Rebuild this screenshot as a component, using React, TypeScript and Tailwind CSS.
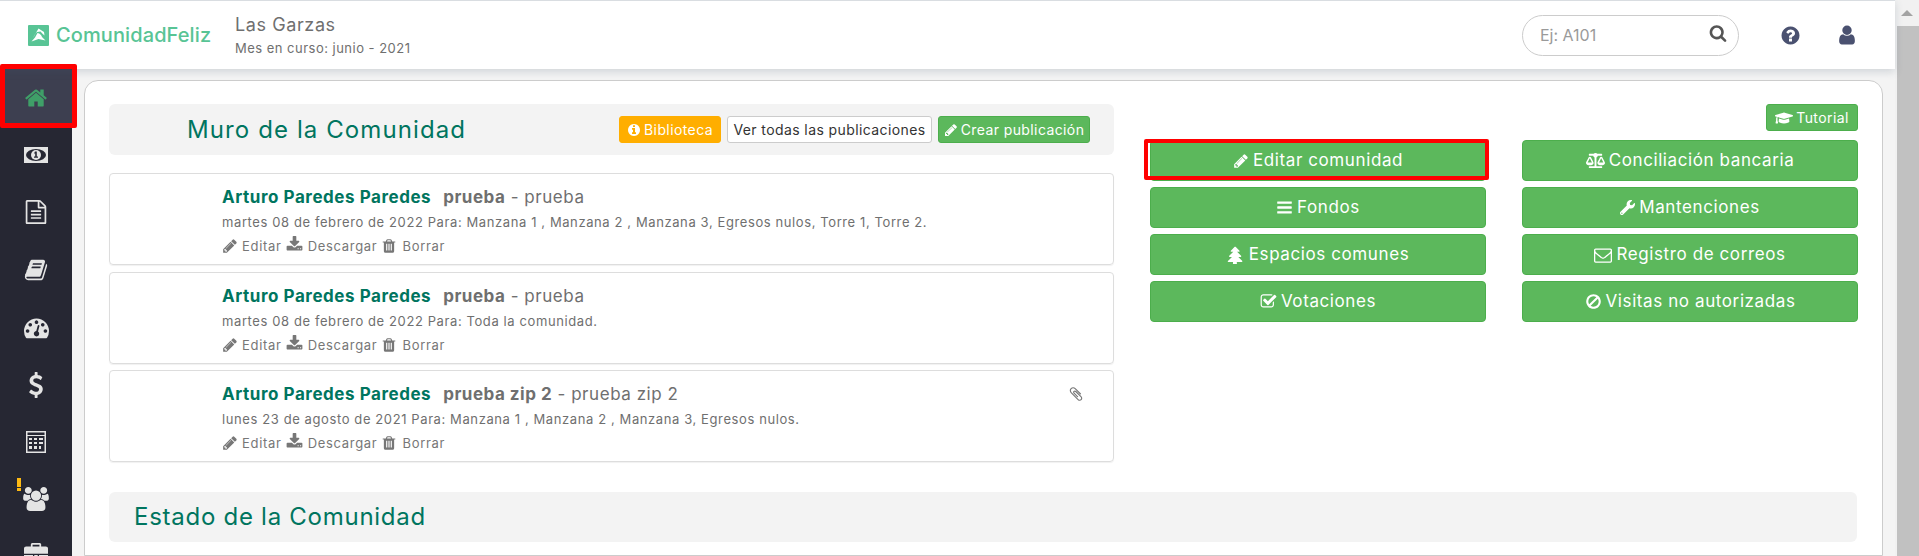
import type { ReactNode } from "react";
import { FaBalanceScale, FaGraduationCap, FaWrench } from "react-icons/fa";

// font awesome 4 glyphs, react-icons only ships the newer set
const glyphs = {
  home: "M1472 992v480q0 26-19 45t-45 19h-384v-384h-256v384h-384q-26 0-45-19t-19-45v-480q0-1 .5-3t.5-3l575-474 575 474q1 2 1 6zm223-69l-62 74q-8 9-21 11h-3q-13 0-21-7l-692-577-692 577q-12 8-24 7-13-2-21-11l-62-74q-8-10-7-23.500t11-21.500l719-599q32-26 76-26t76 26l244 204v-195q0-14 9-23t23-9h192q14 0 23 9t9 23v408l219 182q10 8 11 21.500t-7 23.500z",
  pencil: "M491 1536l91-91-235-235-91 91v107h128v128h107zm523-928q0-22-22-22-10 0-17 7l-542 542q-7 7-7 17 0 22 22 22 10 0 17-7l542-542q7-7 7-17zm-54-192l416 416-832 832h-416v-416zm683 96q0 53-37 90l-166 166-416-416 166-165q36-38 90-38 53 0 91 38l235 234q37 39 37 91z",
  download: "M1344 1344q0-26-19-45t-45-19-45 19-19 45 19 45 45 19 45-19 19-45zm256 0q0-26-19-45t-45-19-45 19-19 45 19 45 45 19 45-19 19-45zm128-224v320q0 40-28 68t-68 28h-1472q-40 0-68-28t-28-68v-320q0-40 28-68t68-28h465l135 136q58 56 136 56t136-56l136-136h464q40 0 68 28t28 68zm-325-569q17 41-14 70l-448 448q-18 19-45 19t-45-19l-448-448q-31-29-14-70 17-39 59-39h256v-448q0-26 19-45t45-19h256q26 0 45 19t19 45v448h256q42 0 59 39z",
  trash: "M704 1376v-704q0-14-9-23t-23-9h-64q-14 0-23 9t-9 23v704q0 14 9 23t23 9h64q14 0 23-9t9-23zm256 0v-704q0-14-9-23t-23-9h-64q-14 0-23 9t-9 23v704q0 14 9 23t23 9h64q14 0 23-9t9-23zm256 0v-704q0-14-9-23t-23-9h-64q-14 0-23 9t-9 23v704q0 14 9 23t23 9h64q14 0 23-9t9-23zm-544-992h448l-48-117q-7-9-17-11h-317q-10 2-17 11zm928 32v64q0 14-9 23t-23 9h-96v948q0 83-47 143.500t-113 60.500h-832q-66 0-113-58.500t-47-141.500v-952h-96q-14 0-23-9t-9-23v-64q0-14 9-23t23-9h309l70-167q15-37 54-63t79-26h320q40 0 79 26t54 63l70 167h309q14 0 23 9t9 23z",
  file: "M1596 380q28 28 48 76t20 88v1152q0 40-28 68t-68 28h-1344q-40 0-68-28t-28-68v-1600q0-40 28-68t68-28h896q40 0 88 20t76 48zm-444-244v376h376q-10-29-22-41l-313-313q-12-12-41-22zm384 1528v-1024h-416q-40 0-68-28t-28-68v-416h-768v1536h1280zm-1024-864q0-14 9-23t23-9h704q14 0 23 9t9 23v64q0 14-9 23t-23 9h-704q-14 0-23-9t-9-23v-64zm736 224q14 0 23 9t9 23v64q0 14-9 23t-23 9h-704q-14 0-23-9t-9-23v-64q0-14 9-23t23-9h704zm0 256q14 0 23 9t9 23v64q0 14-9 23t-23 9h-704q-14 0-23-9t-9-23v-64q0-14 9-23t23-9h704z",
  book: "M1703 478q40 57 18 129l-275 906q-19 64-76.500 107.500t-122.500 43.500h-923q-77 0-148.500-53.500t-99.500-131.500q-24-67-2-127 0-4 3-27t4-37q1-8-3-21.500t-3-19.500q2-11 8-21t16.500-23.500 16.500-23.500q23-38 45-91.500t30-91.500q3-10 .5-30t-.5-28q3-11 17-28t17-23q21-36 42-92t25-90q1-9-2.500-32t.5-28q4-13 22-30.500t22-22.500q19-26 42.500-84.500t27.500-96.500q1-8-3-25.500t-2-26.500q2-8 9-18t18-23 17-21q8-12 16.500-30.500t15-35 16-36 19.500-32 26.500-23.500 36-11.500 47.500 5.500l-1 3q38-9 51-9h761q74 0 114 56t18 130l-274 906q-36 119-71.500 153.500t-128.500 34.500h-869q-27 0-38 15-11 16-1 43 24 70 144 70h923q29 0 56-15.500t35-41.500l300-987q7-22 5-57 38 15 59 43zm-1064 2q-4 13 2 22.500t20 9.500h608q13 0 25.500-9.500t16.500-22.500l21-64q4-13-2-22.500t-20-9.500h-608q-13 0-25.500 9.500t-16.500 22.500zm-83 256q-4 13 2 22.500t20 9.500h608q13 0 25.500-9.500t16.500-22.500l21-64q4-13-2-22.500t-20-9.500h-608q-13 0-25.500 9.500t-16.500 22.500z",
  dashboard: "M384 1152q0-53-37.500-90.500t-90.500-37.500-90.500 37.500-37.500 90.500 37.500 90.500 90.500 37.500 90.500-37.500 37.500-90.500zm192-448q0-53-37.500-90.500t-90.500-37.500-90.500 37.500-37.500 90.500 37.500 90.500 90.500 37.500 90.500-37.500 37.500-90.500zm428 481l101-382q6-26-7.500-48.500t-38.500-29.500-48 6.500-30 39.500l-101 382q-60 5-107 43.500t-63 98.500q-20 77 20 146t117 89 146-20 89-117q16-60-6-117t-72-91zm660-33q0-53-37.500-90.500t-90.500-37.500-90.500 37.500-37.500 90.500 37.500 90.500 90.500 37.500 90.500-37.500 37.500-90.500zm-640-640q0-53-37.500-90.500t-90.500-37.500-90.500 37.500-37.500 90.500 37.500 90.500 90.500 37.500 90.500-37.500 37.500-90.500zm448 192q0-53-37.500-90.500t-90.500-37.500-90.500 37.500-37.500 90.500 37.500 90.500 90.500 37.500 90.500-37.500 37.500-90.500zm320 448q0 261-141 483-19 29-54 29h-1402q-35 0-54-29-141-221-141-483 0-182 71-348t191-286 286-191 348-71 348 71 286 191 191 286 71 348z",
  dollar: "M1362 1185q0 153-99.500 263.500t-258.500 136.500v175q0 14-9 23t-23 9h-135q-13 0-22.500-9.500t-9.500-22.500v-175q-66-9-127.500-31t-101.500-44.500-74-48-46.500-37.500-17.500-18q-17-21-2-41l103-135q7-10 23-12 15-2 24 9l2 2q113 99 243 125 37 8 74 8 81 0 142.500-43t61.500-122q0-28-15-53t-33.500-42-58.500-37.500-66-32-80-32.500q-39-16-61.500-25t-61.500-26.500-62.500-31-56.500-35.500-53.500-42.500-43.500-49-35.500-58-21-66.500-8.500-78q0-138 98-242t255-134v-180q0-13 9.500-22.500t22.500-9.500h135q14 0 23 9t9 23v176q57 6 110.500 23t87 33.500 63.500 37.500 39 29 15 14q17 18 5 38l-81 146q-8 15-23 16-14 3-27-7-3-3-14.500-12t-39-26.500-58.500-32-74.500-26-85.500-11.500q-95 0-155 43t-60 111q0 26 8.500 48t29.500 41.500 39.500 33 56 31 60.500 27 70 27.500q53 20 81 31.500t76 35 75.500 42.500 62 50 53 63.500 31.500 76.500 13 94z",
  briefcase: "M640 256h512v-128h-512v128zm1152 640v480q0 66-47 113t-113 47h-1472q-66 0-113-47t-47-113v-480h672v160q0 26 19 45t45 19h320q26 0 45-19t19-45v-160h672zm-768 0v128h-256v-128h256zm768-480v384h-1792v-384q0-66 47-113t113-47h352v-160q0-40 28-68t68-28h576q40 0 68 28t28 68v160h352q66 0 113 47t47 113z",
  question: "M1024 1376v-192q0-14-9-23t-23-9h-192q-14 0-23 9t-9 23v192q0 14 9 23t23 9h192q14 0 23-9t9-23zm256-672q0-88-55.500-163t-138.500-116-170-41q-243 0-371 213-15 24 8 42l132 100q7 6 19 6 16 0 25-12 53-68 86-92 34-24 86-24 48 0 85.500 26t37.500 59q0 38-20 61t-68 45q-63 28-115.500 86.500t-52.500 125.500v36q0 14 9 23t23 9h192q14 0 23-9t9-23q0-19 21.500-49.500t54.500-49.500q32-18 49-28.500t46-35 44.500-48 28-60.500 12.500-81zm384 192q0 209-103 385.500t-279.500 279.500-385.500 103-385.500-103-279.500-279.500-103-385.500 103-385.500 279.500-279.500 385.500-103 385.500 103 279.500 279.500 103 385.500z",
  user: "M1536 1399q0 109-62.500 187t-150.500 78h-854q-88 0-150.500-78t-62.500-187q0-85 8.500-160.500t31.500-152 58.500-131 94-89 134.500-34.500q131 128 313 128t313-128q76 0 134.500 34.500t94 89 58.500 131 31.500 152 8.500 160.500zm-256-887q0 159-112.500 271.500t-271.500 112.500-271.500-112.500-112.500-271.500 112.500-271.500 271.500-112.500 271.500 112.500 112.500 271.500z",
  search: "M1216 832q0-185-131.500-316.500t-316.500-131.500-316.500 131.500-131.500 316.500 131.500 316.500 316.500 131.500 316.500-131.500 131.500-316.500zm512 832q0 52-38 90t-90 38q-54 0-90-38l-343-342q-179 124-399 124-143 0-273.500-55.500t-225-150-150-225-55.500-273.500 55.500-273.500 150-225 225-150 273.500-55.500 273.500 55.500 225 150 150 225 55.500 273.500q0 220-124 399l343 343q37 37 37 90z",
  info: "M1152 1376v-160q0-14-9-23t-23-9h-96v-512q0-14-9-23t-23-9h-320q-14 0-23 9t-9 23v160q0 14 9 23t23 9h96v320h-96q-14 0-23 9t-9 23v160q0 14 9 23t23 9h448q14 0 23-9t9-23zm-128-896v-160q0-14-9-23t-23-9h-192q-14 0-23 9t-9 23v160q0 14 9 23t23 9h192q14 0 23-9t9-23zm640 416q0 209-103 385.500t-279.500 279.500-385.500 103-385.500-103-279.500-279.500-103-385.500 103-385.500 279.500-279.500 385.500-103 385.500 103 279.500 279.500 103 385.500z",
  envelope: "M1664 1504v-768q-32 36-69 66-268 206-426 338-51 43-83 67t-86.500 48.500-102.500 24.500h-2q-48 0-102.500-24.500t-86.500-48.500-83-67q-158-132-426-338-37-30-69-66v768q0 13 9.500 22.500t22.500 9.500h1472q13 0 22.500-9.500t9.500-22.500zm0-1051v-24.500l-.5-13-3-12.500-5.500-9-9-7.500-14-2.500h-1472q-13 0-22.500 9.500t-9.500 22.500q0 168 147 284 193 152 401 317 6 5 35 29.500t46 37.500 44.500 31.500 50.500 27.500 43 9h2q20 0 43-9t50.500-27.500 44.500-31.500 46-37.500 35-29.500q208-165 401-317 54-43 100.500-115.500t46.500-131.500zm128-37v1088q0 66-47 113t-113 47h-1472q-66 0-113-47t-47-113v-1088q0-66 47-113t113-47h1472q66 0 113 47t47 113z",
  check: "M1472 930v318q0 119-84.500 203.500t-203.500 84.500h-832q-119 0-203.500-84.500t-84.500-203.500v-832q0-119 84.500-203.500t203.500-84.500h832q63 0 117 25 15 7 18 23 3 17-9 29l-49 49q-10 10-23 10-3 0-9-2-23-6-45-6h-832q-66 0-113 47t-47 113v832q0 66 47 113t113 47h832q66 0 113-47t47-113v-254q0-13 9-22l64-64q10-10 23-10 6 0 12 3 20 8 20 29zm231-489l-814 814q-24 24-57 24t-57-24l-430-430q-24-24-24-57t24-57l110-110q24-24 57-24t57 24l263 263 647-647q24-24 57-24t57 24l110 110q24 24 24 57t-24 57z",
  clip: "M1596 1385q0 117-79 196t-196 79q-135 0-235-100l-777-776q-113-115-113-271 0-159 110-270t269-111q158 0 273 113l605 606q10 10 10 22 0 16-30.500 46.500t-46.500 30.500q-13 0-23-10l-606-607q-79-77-181-77-106 0-179 75t-73 181q0 105 76 181l776 777q63 63 145 63 64 0 106-42t42-106q0-82-63-145l-581-581q-26-24-60-24-29 0-48 19t-19 48q0 32 25 59l410 410q10 10 10 22 0 16-31 47t-47 31q-12 0-22-10l-410-410q-63-61-63-149 0-82 57-139t139-57q88 0 149 63l581 581q100 98 100 235z",
  bars: "M1664 1344v128q0 26-19 45t-45 19h-1408q-26 0-45-19t-19-45v-128q0-26 19-45t45-19h1408q26 0 45 19t19 45zm0-512v128q0 26-19 45t-45 19h-1408q-26 0-45-19t-19-45v-128q0-26 19-45t45-19h1408q26 0 45 19t19 45zm0-512v128q0 26-19 45t-45 19h-1408q-26 0-45-19t-19-45v-128q0-26 19-45t45-19h1408q26 0 45 19t19 45z",
  tree: "M1500 1536q0 26-19 45t-45 19h-460q2 38 7 114t5 118q0 24-16 40t-40 16h-288q-24 0-40-16t-16-40q0-42 5-118t7-114h-460q-26 0-45-19t-19-45 19-45l402-403h-229q-26 0-45-19t-19-45 19-45l402-403h-197q-26 0-45-19t-19-45 19-45l384-384q19-19 45-19t45 19l384 384q19 19 19 45t-19 45-45 19h-197l402 403q19 19 19 45t-19 45-45 19h-229l402 403q19 19 19 45z",
  ban: "M1440 893q0-161-87-295l-754 753q137 89 297 89 111 0 211.500-43.500t173.500-116.500 116-174.500 43-212.500zm-999 299l755-754q-135-91-300-91-148 0-273 73t-198 199-73 274q0 162 89 299zm1223-299q0 157-61 300t-163.500 246-245 164-298.500 61-298.500-61-245-164-163.500-246-61-300 61-299.500 163.500-245.500 245-164 298.500-61 298.500 61 245 164 163.500 245.500 61 299.500z",
};

type GlyphName = keyof typeof glyphs;

function Glyph({ name, size, className }: { name: GlyphName; size: number; className?: string }) {
  return (
    <svg width={size} height={size} viewBox="0 0 1792 1792" fill="currentColor" className={`shrink-0 ${className ?? ""}`}>
      <path d={glyphs[name]} />
    </svg>
  );
}

function UsersIcon() {
  return (
    <svg width="26" height="24" viewBox="0 0 1920 1792" fill="currentColor">
      <path d="M593 896q-162 5-265 128h-134q-82 0-138-40.500t-56-118.500q0-353 124-353 6 0 43.500 21t97.500 42.500 119 21.500q67 0 133-23-5 37-5 66 0 139 81 256zm1071 637q0 120-73 189.500t-194 69.500h-874q-121 0-194-69.500t-73-189.500q0-53 3.500-103.500t14-109 26.500-108.500 43-97.500 62-81 85.500-53.500 111.500-20q10 0 43 21.500t73 48 107 48 135 21.500 135-21.500 107-48 73-48 43-21.500q61 0 111.500 20t85.500 53.500 62 81 43 97.500 26.500 108.500 14 109 3.500 103.500zm-1024-1277q0 106-75 181t-181 75-181-75-75-181 75-181 181-75 181 75 75 181zm704 384q0 159-112.500 271.500t-271.500 112.500-271.500-112.500-112.500-271.500 112.500-271.500 271.500-112.500 271.500 112.500 112.500 271.500zm576 225q0 78-56 118.500t-138 40.500h-134q-103-123-265-128 81-117 81-256 0-29-5-66 66 23 133 23 59 0 119-21.500t97.500-42.500 43.500-21q124 0 124 353zm-128-609q0 106-75 181t-181 75-181-75-75-181 75-181 181-75 181 75 75 181z" />
    </svg>
  );
}

function MoneyIcon() {
  return (
    <svg width="24" height="16" viewBox="0 0 24 16" fill="none">
      <rect width="24" height="16" fill="#e4e4e4" />
      <ellipse cx="12" cy="8" rx="10" ry="6" fill="#262733" />
      <circle cx="12" cy="8" r="5" fill="#e4e4e4" />
      <path d="M11 4.500h1.800v5h1.200v1.200h-4v-1.200h1.200V6.500h-1.200z" fill="#262733" />
    </svg>
  );
}

function CalculatorIcon() {
  return (
    <svg width="20" height="22" viewBox="0 0 20 22" fill="#e4e4e4">
      <path d="M0 0h20v22H0zM1.500 5v15.500h17V5zM1.500 1.500V4h17V1.500z" fillRule="evenodd" />
      <path d="M3 7h3v2H3zM8 7h3v2H8zM13 7h4v2h-4zM3 11h3v2H3zM8 11h3v2H8zM13 11h4v2h-4zM3 15h3v3H3zM8 15h3v3H8zM13 15h2v3h-2z" />
    </svg>
  );
}

function Logo() {
  return (
    <div className="flex items-center gap-[7px]">
      <svg width="21" height="21" viewBox="0 0 21 21">
        <rect width="21" height="21" rx="1" fill="#58c495" />
        <path d="M10.500 3.500 16 7l.5 3.500-2-1.800-2-2.200-3.500.5L6.500 10 5 13z" fill="#fff" />
        <path d="M9.500 8c2.500.5 3.800 2 4.500 4l3.500 3.500-7-1.500-7 2.500 3.500-4z" fill="#fff" />
      </svg>
      <span className="text-[20px] font-medium tracking-[0.1px] text-[#58c495]">ComunidadFeliz</span>
    </div>
  );
}

function Header() {
  return (
    <header className="relative z-10 flex h-[69px] shrink-0 items-center border-t-[1px] border-[#d9dde1] bg-white shadow-[0_3px_8px_rgba(70,90,110,0.2)]">
      <div className="ml-[28px] w-[207px]">
        <Logo />
      </div>
      <div className="flex flex-col">
        <span className="mb-[3px] text-[18px] leading-[22px] tracking-[0.6px] text-[#6f6f6f]">Las Garzas</span>
        <span className="text-[13px] leading-[18px] tracking-[0.48px] text-[#6f6f6f]">Mes en curso: junio - 2021</span>
      </div>
      <div className="ml-auto flex items-center">
        <div className="flex h-[41px] w-[217px] items-center justify-between rounded-[21px] border border-[#cccccc] pl-[17px] pr-[11px]">
          <span className="text-[16px] text-[#9a9a9a]">Ej: A101</span>
          <Glyph name="search" size={18} className="mb-[4px] text-[#555555]" />
        </div>
        <Glyph name="question" size={21} className="ml-[41px] text-[#4a5170]" />
        <Glyph name="user" size={22} className="ml-[35px] mr-[37px] text-[#4a5170]" />
      </div>
    </header>
  );
}

const sideItems: { icon: ReactNode; height: string }[] = [
  { icon: <Glyph name="file" size={24} />, height: "h-[58px]" },
  { icon: <Glyph name="book" size={24} />, height: "h-[57px]" },
  { icon: <Glyph name="dashboard" size={25} />, height: "h-[58px]" },
  { icon: <Glyph name="dollar" size={26} />, height: "h-[57px]" },
  { icon: <CalculatorIcon />, height: "h-[57px]" },
];

function Sidebar() {
  return (
    <aside className="flex w-[72px] shrink-0 flex-col items-stretch bg-[#262733] text-[#e4e4e4]">
      <div className="flex h-[55px] shrink-0 items-center justify-center bg-[#3d3f50] pt-[3px]">
        <Glyph name="home" size={24} className="text-[#3f9f68]" />
      </div>
      <div className="flex h-[59px] shrink-0 items-center justify-center pt-[3px]">
        <MoneyIcon />
      </div>
      {sideItems.map((item, i) => (
        <div key={i} className={`flex ${item.height} shrink-0 items-center justify-center`}>
          {item.icon}
        </div>
      ))}
      <div className="relative flex h-[57px] shrink-0 items-center justify-center">
        <span className="absolute left-[17px] top-[8px] h-[13px] w-[4px] bg-[linear-gradient(#fdb913_70%,transparent_70%,transparent_80%,#fdb913_80%)]" />
        <UsersIcon />
      </div>
      <div className="flex h-[56px] shrink-0 items-center justify-center">
        <Glyph name="briefcase" size={24} />
      </div>
    </aside>
  );
}

function SmallButton({ className, children }: { className: string; children: ReactNode }) {
  return (
    <span className={`flex h-[27px] items-center justify-center gap-[3px] rounded-[3px] border text-[14px] tracking-[0.4px] ${className}`}>
      {children}
    </span>
  );
}

interface Post {
  title: string;
  text: string;
  meta: string;
  clip?: boolean;
}

const posts: Post[] = [
  {
    title: "prueba",
    text: "prueba",
    meta: "martes 08 de febrero de 2022 Para: Manzana 1 , Manzana 2 , Manzana 3, Egresos nulos, Torre 1, Torre 2.",
  },
  { title: "prueba", text: "prueba", meta: "martes 08 de febrero de 2022 Para: Toda la comunidad." },
  {
    title: "prueba zip 2",
    text: "prueba zip 2",
    meta: "lunes 23 de agosto de 2021 Para: Manzana 1 , Manzana 2 , Manzana 3, Egresos nulos.",
    clip: true,
  },
];

function PostCard({ post }: { post: Post }) {
  return (
    <article className="relative h-[92px] rounded-[4px] border border-[#dddddd] pl-[112px] pt-[11px] shadow-[0_1px_1px_rgba(0,0,0,0.06)]">
      <div className="text-[17px] leading-[24px] text-[#6f6f6f]">
        <b className="font-bold tracking-[0.55px] text-[#00755f]">Arturo Paredes Paredes</b>
        <b className="ml-[12px] font-bold tracking-[0.5px] text-[#6f6f6f]">{post.title}</b>
        <span className="tracking-[0.55px]"> - {post.text}</span>
      </div>
      <div className="mt-[1px] text-[13px] leading-[24px] tracking-[0.6px] text-[#6f6f6f]">{post.meta}</div>
      <div className="flex items-center text-[13px] leading-[24px] tracking-[0.7px] text-[#777777]">
        <Glyph name="pencil" size={16} className="mr-[4px]" />
        Editar
        <Glyph name="download" size={17} className="mb-[3px] ml-[4px] mr-[5px]" />
        Descargar
        <Glyph name="trash" size={16} className="ml-[4px] mr-[5px]" />
        Borrar
      </div>
      {post.clip ? <Glyph name="clip" size={16} className="absolute right-[29px] top-[15px] text-[#777777]" /> : null}
    </article>
  );
}

function WallColumn() {
  return (
    <section className="w-[1005px] shrink-0">
      <div className="mb-[18px] flex h-[51px] items-center rounded-[6px] bg-[#f3f3f3] pl-[78px] pr-[24px]">
        <h2 className="text-[24px] tracking-[1.1px] text-[#00755f]">Muro de la Comunidad</h2>
        <div className="ml-auto flex gap-[6px]">
          <SmallButton className="w-[102px] border-[#ffae00] bg-[#ffae00] text-white">
            <Glyph name="info" size={14} />
            Biblioteca
          </SmallButton>
          <SmallButton className="w-[205px] border-[#cccccc] bg-white text-[#333333]">Ver todas las publicaciones</SmallButton>
          <SmallButton className="w-[152px] border-[#4cae4c] bg-[#5cb85c] text-white">
            <Glyph name="pencil" size={14} />
            Crear publicación
          </SmallButton>
        </div>
      </div>
      <div className="flex flex-col gap-[6.5px]">
        {posts.map((post, i) => (
          <PostCard key={i} post={post} />
        ))}
      </div>
    </section>
  );
}

const actions: { label: string; icon: ReactNode }[] = [
  { label: "Editar comunidad", icon: <Glyph name="pencil" size={16} /> },
  { label: "Conciliación bancaria", icon: <FaBalanceScale className="text-[19px]" /> },
  { label: "Fondos", icon: <Glyph name="bars" size={17} /> },
  { label: "Mantenciones", icon: <FaWrench className="text-[15px]" /> },
  { label: "Espacios comunes", icon: <Glyph name="tree" size={18} /> },
  { label: "Registro de correos", icon: <Glyph name="envelope" size={18} /> },
  { label: "Votaciones", icon: <Glyph name="check" size={17} /> },
  { label: "Visitas no autorizadas", icon: <Glyph name="ban" size={17} /> },
];

function ActionsColumn() {
  return (
    <section className="flex-1">
      <div className="flex justify-end">
        <SmallButton className="w-[92px] border-[#4cae4c] bg-[#5cb85c] text-white">
          <FaGraduationCap className="text-[18px]" />
          Tutorial
        </SmallButton>
      </div>
      <div className="relative mt-[9px] grid grid-cols-2 gap-x-[36px] gap-y-[6px]">
        {actions.map(({ label, icon }) => (
          <div
            key={label}
            className="flex h-[41px] items-center justify-center gap-[4px] rounded-[4px] border border-[#4cae4c] bg-[#5cb85c] text-[17px] tracking-[0.6px] text-white"
          >
            {icon}
            {label}
          </div>
        ))}
        <div className="absolute left-[-6px] top-[-1px] h-[41px] w-[345px] rounded-[2px] border-[4px] border-[#ff0000]" />
      </div>
    </section>
  );
}

export default function App() {
  return (
    <div className="flex h-[556px] w-full overflow-hidden bg-white font-['Inter',sans-serif]">
      <div className="flex min-w-0 flex-1 flex-col">
        <Header />
        <div className="relative flex min-h-0 flex-1">
          <Sidebar />
          <main className="flex-1 bg-[#f4f4f4] pl-[12px] pr-[12px] pt-[11px]">
            <div className="h-full rounded-t-[14px] border border-[#cccccc] bg-white pl-[24px] pr-[24px] pt-[23px]">
              <div className="flex gap-[36px]">
                <WallColumn />
                <ActionsColumn />
              </div>
              <div className="mr-[1px] mt-[30px] flex h-[50px] items-center rounded-[6px] bg-[#f3f3f3] pl-[25px]">
                <h2 className="text-[24px] tracking-[0.73px] text-[#00755f]">Estado de la Comunidad</h2>
              </div>
            </div>
          </main>
          <div className="absolute left-0 top-[-5px] z-20 h-[64px] w-[77px] rounded-[2px] border-[5px] border-[#ff0000]" />
        </div>
      </div>
      <div className="flex w-[24px] shrink-0 flex-col bg-[#f1f1f1]">
        <div className="flex h-[26px] items-center justify-center">
          <span className="h-0 w-0 border-x-[6px] border-b-[6px] border-x-transparent border-b-[#a3a3a3]" />
        </div>
        <div className="ml-[2px] flex-1 bg-[#c1c1c1]" />
      </div>
    </div>
  );
}
